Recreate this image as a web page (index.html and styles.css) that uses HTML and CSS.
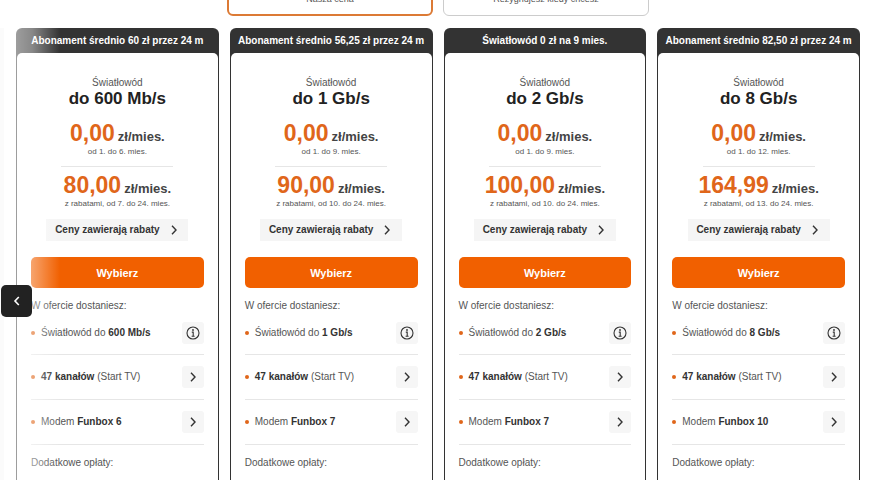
FILE: index.html
```html
<!DOCTYPE html>
<html lang="pl">
<head>
<meta charset="utf-8">
<title>Światłowód – oferta</title>
<link rel="stylesheet" href="styles.css">
</head>
<body>
<svg class="sprite" aria-hidden="true">
  <symbol id="chevron" viewBox="0 0 12 12"><path d="M4 1.8L8 6l-4 4.2" fill="none" stroke="currentColor" stroke-width="1.4"/></symbol>
  <symbol id="info" viewBox="0 0 14 14"><circle cx="7" cy="7" r="6" fill="none" stroke="currentColor" stroke-width="1.1"/><circle cx="7" cy="4" r=".9" fill="currentColor"/><path d="M5.8 6.1h1.4v4M5.6 10.3h3" fill="none" stroke="currentColor" stroke-width="1.1"/></symbol>
</svg>
<nav class="tabs">
  <button class="tab selected" type="button">Nasza cena</button>
  <button class="tab" type="button">Rezygnujesz kiedy chcesz</button>
</nav>
<main class="carousel">
  <div class="offers" id="offers"></div>
  <div class="fade"></div>
  <button class="prev" type="button" aria-label="Poprzednie"><svg viewBox="0 0 12 12"><path d="M7.8 2L4 6l3.8 4" fill="none" stroke="currentColor" stroke-width="1.6"/></svg></button>
</main>
<script src="script.js"></script>
</body>
</html>
```
FILE: styles.css
```css
* { box-sizing: border-box; }
body { margin: 0; height: 100vh; overflow: hidden; background: #fff; color: #555; font-family: "Liberation Sans", Arial, sans-serif; font-size: 10px; line-height: 12px; }
h2, p, ul { margin: 0; padding: 0; font-size: inherit; font-weight: inherit; }
button { font: inherit; color: inherit; border: 0; cursor: pointer; }
b { color: #333; }
.sprite { display: none; }
.tabs { display: flex; justify-content: center; gap: 10px; height: 28px; padding-right: 4px; overflow: hidden; }
.tab { flex: 0 1 206px; margin-top: -40px; height: 56px; padding: 22px 0 0; background: #fff; border: 1px solid #ccc; border-radius: 6px; font-size: 9px; }
.tab.selected { border: 2px solid #dc7a35; }
.carousel { position: relative; }
.offers { display: grid; grid-template-columns: repeat(4, 1fr); gap: 11px; padding: 0 20px 0 16px; }
.card { background: #333; border-radius: 6px 6px 0 0; }
.banner { height: 25px; line-height: 25px; text-align: center; color: #fff; font-weight: bold; white-space: nowrap; }
.body { margin: 0 1px; padding: 24px 14px 40px; background: #fff; border-radius: 5px 5px 0 0; text-align: center; }
.speed { font-size: 17px; line-height: 20px; font-weight: bold; color: #222; }
.price { display: flex; justify-content: center; align-items: baseline; gap: 3px; margin-top: 12px; line-height: 16px; font-size: 13px; font-weight: bold; color: #444; }
.amount { font-size: 23px; line-height: 24px; color: #e0661a; }
.period { font-size: 8px; line-height: 14px; }
.rule { width: 112px; height: 1px; margin: 7px auto 0; background: #e6e6e6; }
.rule + .price { margin-top: 6px; }
.discounts { display: flex; align-items: center; justify-content: center; gap: 8px; width: 142px; height: 22px; margin: 8px auto 0; padding: 0; background: #f5f5f5; color: #333; font-weight: bold; }
.discounts svg, .prev svg, .more svg { width: 12px; height: 12px; }
.choose { display: block; width: 100%; height: 31px; margin-top: 16px; padding: 0; background: #f16000; color: #fff; border-radius: 5px; font-size: 11px; font-weight: bold; }
.label { margin-top: 12px; text-align: left; }
.features { list-style: none; }
.features li { display: flex; align-items: center; height: 45px; border-bottom: 1px solid #e6e6e6; text-align: left; }
.features li:first-child { height: 43px; }
.features li::before { content: ""; width: 4px; height: 4px; margin-right: 6px; border-radius: 50%; background: #e0661a; }
.more { display: grid; place-items: center; width: 22px; height: 22px; margin-left: auto; padding: 0; background: #f6f6f6; color: #333; border-radius: 3px; }
.more svg.info { width: 14px; height: 14px; }
.fade { position: absolute; left: 0; top: 0; bottom: 0; width: 60px; border-left: 4px solid #fbfbfb; background: linear-gradient(to right, rgba(255,255,255,.6), rgba(255,255,255,.42) 50%, rgba(255,255,255,0)); pointer-events: none; }
.prev { position: absolute; left: 1px; top: 257px; width: 31px; height: 32px; padding: 0; display: grid; place-items: center; background: #222; color: #fff; border-radius: 5px; }
```
FILE: script.js
```js
const offers = [
  ["Abonament średnio 60 zł przez 24 m", "600 Mb/s", 6, "80,00", 7, "6"],
  ["Abonament średnio 56,25 zł przez 24 m", "1 Gb/s", 9, "90,00", 10, "7"],
  ["Światłowód 0 zł na 9 mies.", "2 Gb/s", 9, "100,00", 10, "7"],
  ["Abonament średnio 82,50 zł przez 24 m", "8 Gb/s", 12, "164,99", 13, "10"]
];
const icon = id => `<svg class="${id}" aria-hidden="true"><use href="#${id}"/></svg>`;
const more = id => `<button class="more" type="button" aria-label="Więcej">${icon(id)}</button>`;
document.getElementById("offers").innerHTML = offers.map(([banner, speed, end, price, start, box]) => `
<article class="card">
  <p class="banner">${banner}</p>
  <div class="body">
    <p>Światłowód</p>
    <h2 class="speed">do ${speed}</h2>
    <p class="price"><span class="amount">0,00</span> <span>zł/mies.</span></p>
    <p class="period">od 1. do ${end}. mies.</p>
    <div class="rule"></div>
    <p class="price"><span class="amount">${price}</span> <span>zł/mies.</span></p>
    <p class="period">z rabatami, od ${start}. do 24. mies.</p>
    <button class="discounts" type="button">Ceny zawierają rabaty ${icon("chevron")}</button>
    <button class="choose" type="button">Wybierz</button>
    <p class="label">W ofercie dostaniesz:</p>
    <ul class="features">
      <li><span>Światłowód do <b>${speed}</b></span>${more("info")}</li>
      <li><span><b>47 kanałów</b> (Start TV)</span>${more("chevron")}</li>
      <li><span>Modem <b>Funbox ${box}</b></span>${more("chevron")}</li>
    </ul>
    <p class="label">Dodatkowe opłaty:</p>
  </div>
</article>`).join("");
```
